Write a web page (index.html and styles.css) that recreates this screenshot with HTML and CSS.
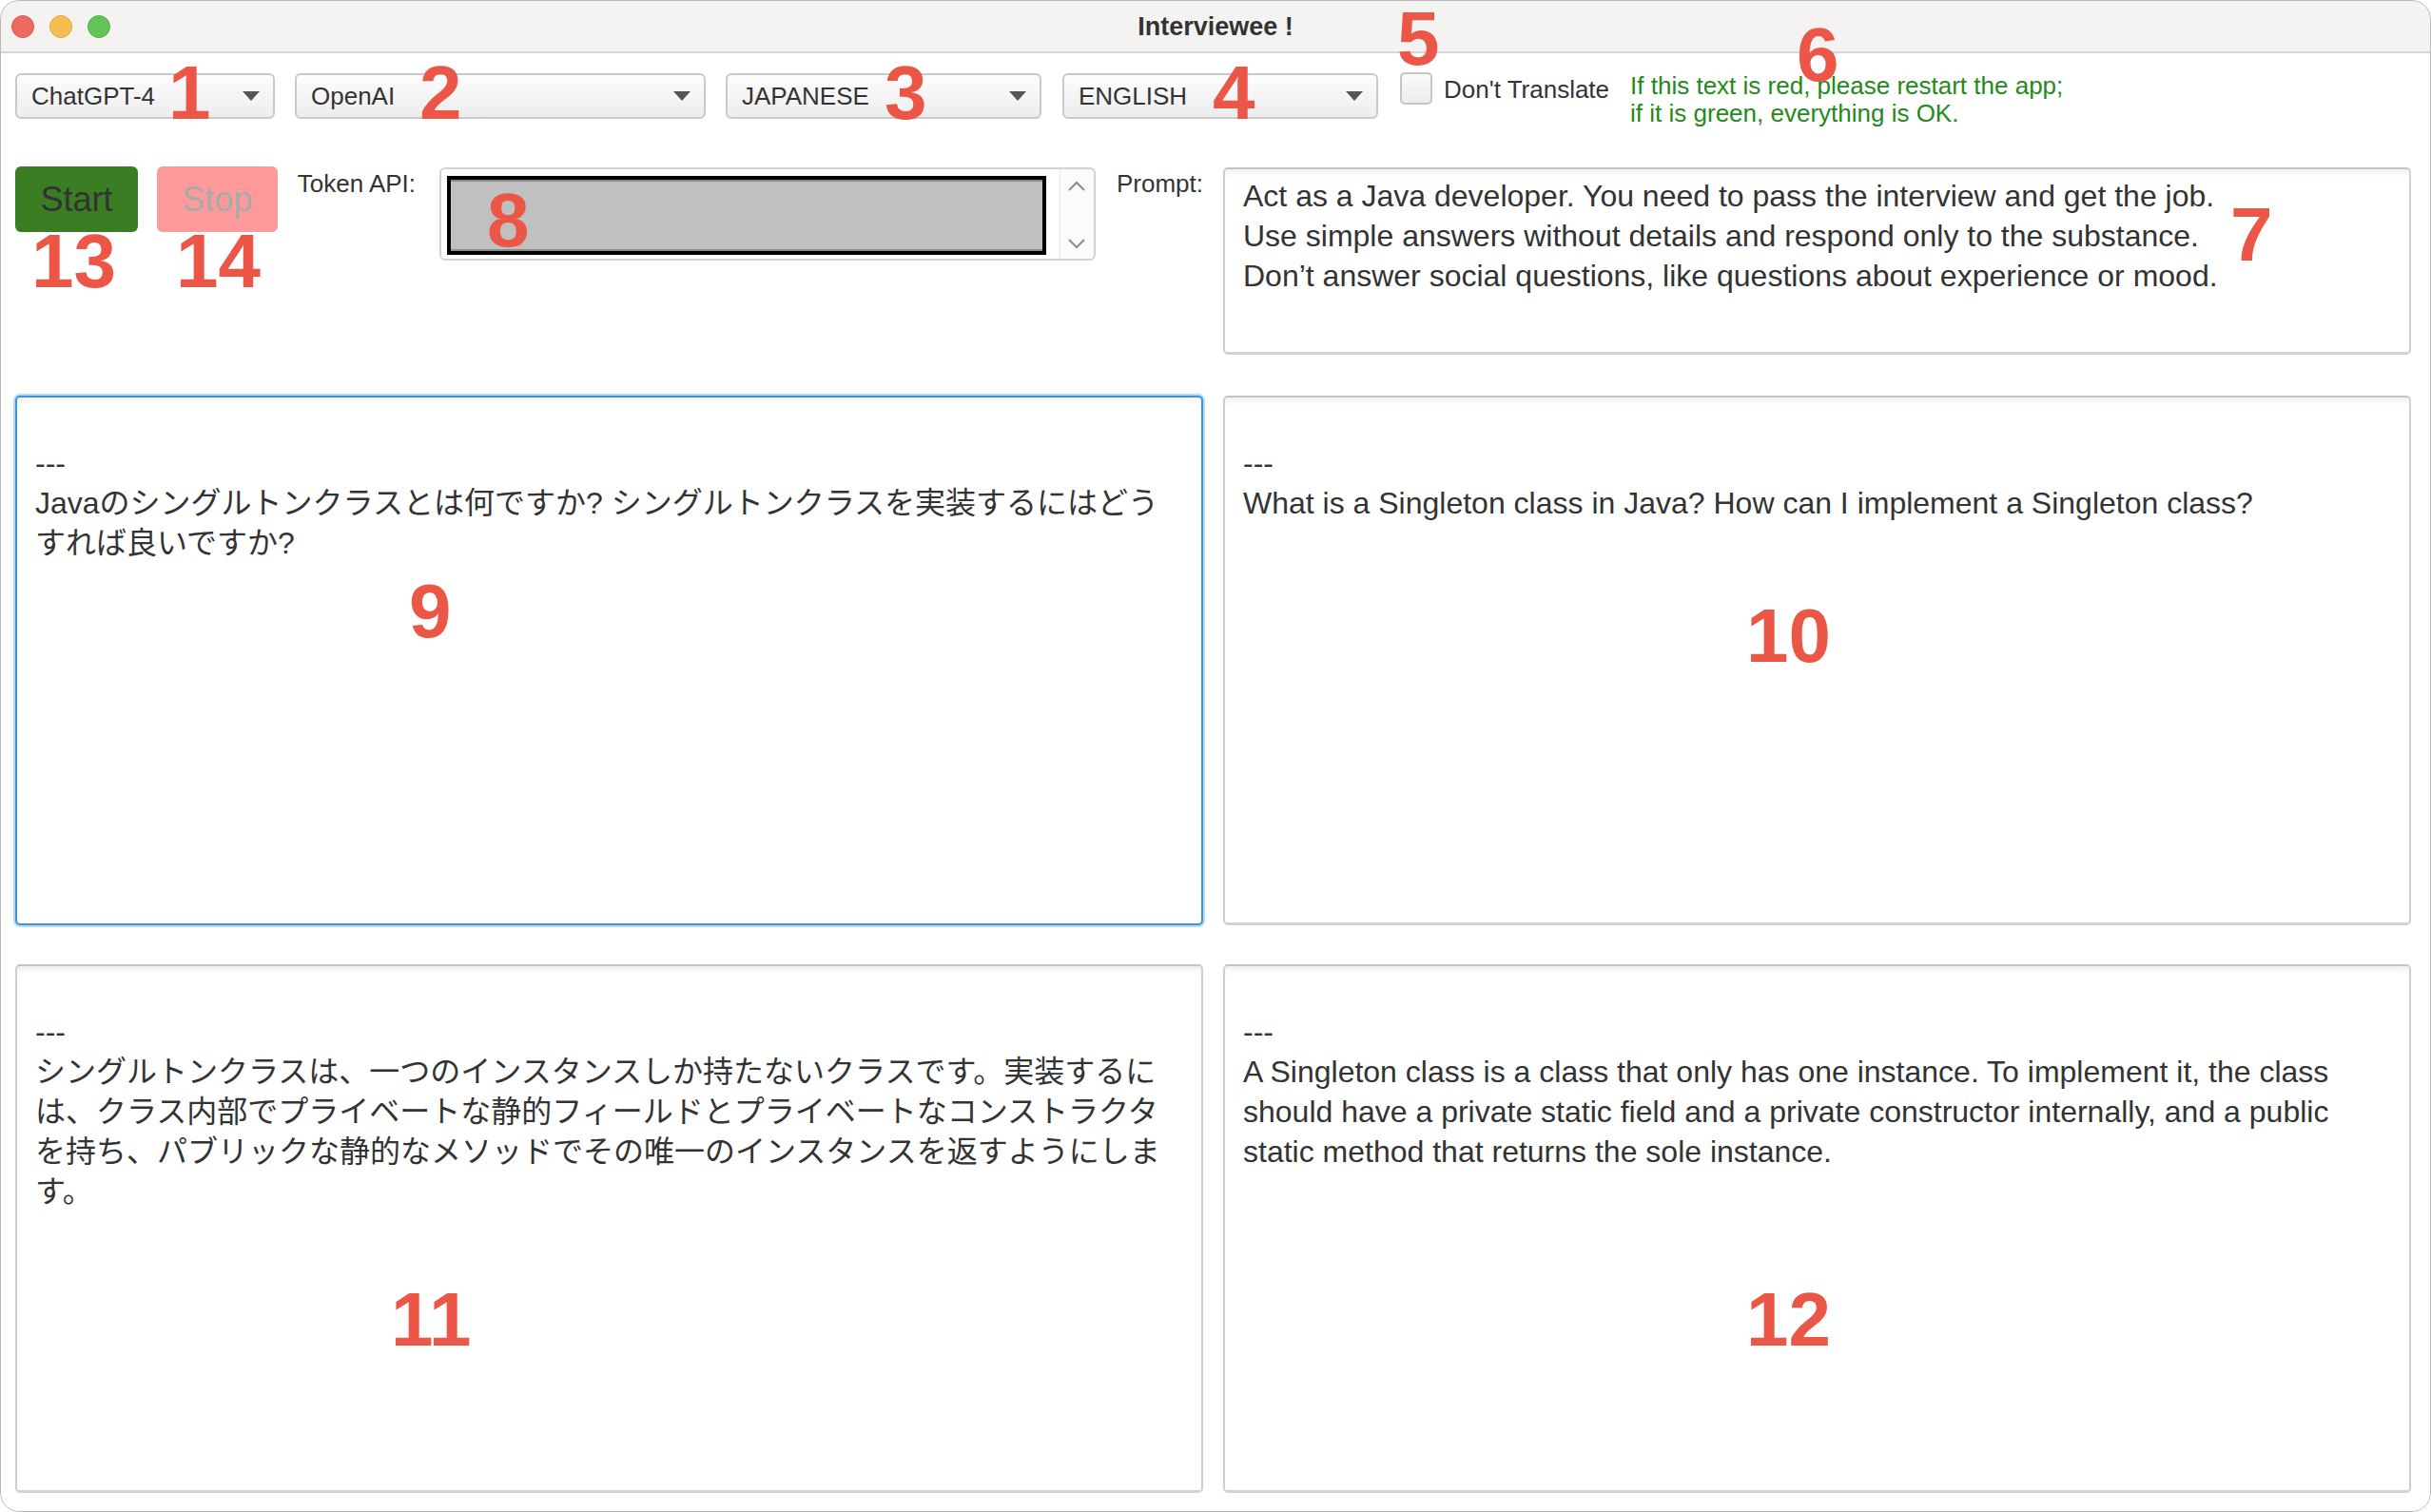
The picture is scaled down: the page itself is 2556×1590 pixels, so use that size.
FILE: index.html
```html
<!DOCTYPE html>
<html lang="en">
<head>
<meta charset="utf-8">
<title>Interviewee !</title>
<link rel="stylesheet" href="styles.css">
</head>
<body>
<div class="window">
  <div class="titlebar">
    <div class="lights">
      <span class="light red"></span>
      <span class="light yellow"></span>
      <span class="light green"></span>
    </div>
    <div class="title">Interviewee !</div>
    <div></div>
  </div>

  <div class="content">
    <div class="toolbar">
      <div class="combo combo-model"><span>ChatGPT-4</span><i class="arrow"></i></div>
      <div class="combo combo-provider"><span>OpenAI</span><i class="arrow"></i></div>
      <div class="combo combo-lang"><span>JAPANESE</span><i class="arrow"></i></div>
      <div class="combo combo-target"><span>ENGLISH</span><i class="arrow"></i></div>
      <div class="check"><span class="checkbox"></span><span class="check-label">Don't Translate</span></div>
      <div class="status">If this text is red, please restart the app;<br>if it is green, everything is OK.</div>
    </div>

    <div class="controls">
      <div class="controls-left">
        <div class="btn btn-start">Start</div>
        <div class="btn btn-stop">Stop</div>
        <span class="label label-token">Token API:</span>
        <div class="token">
          <div class="token-field"></div>
          <div class="token-scroll">
            <svg class="chev" width="20" height="12" viewBox="0 0 20 12"><path d="M2 10 L10 2 L18 10" fill="none" stroke="#8c8c8c" stroke-width="2"/></svg>
            <svg class="chev" width="20" height="12" viewBox="0 0 20 12"><path d="M2 2 L10 10 L18 2" fill="none" stroke="#8c8c8c" stroke-width="2"/></svg>
          </div>
        </div>
        <span class="label label-prompt">Prompt:</span>
      </div>
      <div class="area prompt">Act as a Java developer. You need to pass the interview and get the job.<br>Use simple answers without details and respond only to the substance.<br>Don’t answer social questions, like questions about experience or mood.</div>
    </div>

    <div class="panes">
      <div class="area pane focused"><br>---<br>Javaのシングルトンクラスとは何ですか? シングルトンクラスを実装するにはどう<br>すれば良いですか?</div>
      <div class="area pane"><br>---<br>What is a Singleton class in Java? How can I implement a Singleton class?</div>
      <div class="area pane"><br>---<br>シングルトンクラスは、一つのインスタンスしか持たないクラスです。実装するに<br>は、クラス内部でプライベートな静的フィールドとプライベートなコンストラクタ<br>を持ち、パブリックな静的なメソッドでその唯一のインスタンスを返すようにしま<br>す。</div>
      <div class="area pane"><br>---<br>A Singleton class is a class that only has one instance. To implement it, the class<br>should have a private static field and a private constructor internally, and a public<br>static method that returns the sole instance.</div>
    </div>
  </div>

  <span class="mark m1">1</span>
  <span class="mark m2">2</span>
  <span class="mark m3">3</span>
  <span class="mark m4">4</span>
  <span class="mark m5">5</span>
  <span class="mark m6">6</span>
  <span class="mark m7">7</span>
  <span class="mark m8">8</span>
  <span class="mark m9">9</span>
  <span class="mark m10">10</span>
  <span class="mark m11">11</span>
  <span class="mark m12">12</span>
  <span class="mark m13">13</span>
  <span class="mark m14">14</span>
</div>
</body>
</html>
```

FILE: styles.css
```css
html, body {
  margin: 0;
  padding: 0;
  background: #ffffff;
  overflow: hidden;
}

body {
  font-family: "Liberation Sans", Arial, "Noto Sans CJK JP", sans-serif;
  color: #333333;
}

.window {
  position: relative;
  width: 2556px;
  height: 1590px;
  background: #ffffff;
  border-radius: 20px;
  overflow: hidden;
  box-sizing: border-box;
}

.window::after {
  content: "";
  position: absolute;
  inset: 0;
  border: 1px solid #b9b9b9;
  border-radius: 20px;
  pointer-events: none;
}

/* ---------- title bar ---------- */
.titlebar {
  height: 56px;
  box-sizing: border-box;
  background: #f4f3f2;
  border-bottom: 2px solid #d6d6d6;
  display: grid;
  grid-template-columns: 1fr auto 1fr;
  align-items: center;
}

.lights {
  display: flex;
  gap: 16px;
  padding-left: 12px;
  padding-top: 2px;
}

.light {
  width: 24px;
  height: 24px;
  border-radius: 50%;
  box-sizing: border-box;
}

.light.red { background: #ee6a5f; border: 1px solid #d8574c; }
.light.yellow { background: #f5be4f; border: 1px solid #dca53a; }
.light.green { background: #61c454; border: 1px solid #4eae42; }

.title {
  font-weight: bold;
  font-size: 27px;
  color: #333333;
  padding-top: 2px;
}

/* ---------- content ---------- */
.content {
  padding: 0 21px 0 16px;
}

.toolbar {
  margin-top: 21px;
  height: 48px;
  display: flex;
  align-items: flex-start;
}

.combo {
  height: 48px;
  box-sizing: border-box;
  border: 2px solid #c9c9c9;
  border-radius: 6px;
  background: linear-gradient(to bottom, #fdfdfd, #ededed);
  display: flex;
  align-items: center;
  justify-content: space-between;
  padding: 0 14px 0 15px;
  font-size: 26px;
  color: #333333;
}

.combo-model { width: 273px; }
.combo-provider { width: 432px; margin-left: 21px; }
.combo-lang { width: 332px; margin-left: 21px; }
.combo-target { width: 332px; margin-left: 22px; }

.arrow {
  width: 0;
  height: 0;
  border-left: 9px solid transparent;
  border-right: 9px solid transparent;
  border-top: 10px solid #555555;
}

.check {
  display: flex;
  align-items: center;
  margin-left: 23px;
  margin-top: -1px;
}

.checkbox {
  width: 34px;
  height: 34px;
  box-sizing: border-box;
  border: 2px solid #c6c6c6;
  border-radius: 5px;
  background: linear-gradient(to bottom, #fbfbfb, #ececec);
}

.check-label {
  font-size: 26px;
  margin-left: 12px;
  margin-top: 2px;
  color: #333333;
}

.status {
  margin-left: 22px;
  margin-top: -1px;
  font-size: 26px;
  line-height: 29px;
  color: #238a1a;
}

/* ---------- controls row ---------- */
.controls {
  margin-top: 50px;
  display: grid;
  grid-template-columns: 1249px 1249px;
  column-gap: 21px;
  align-items: start;
}

.controls-left {
  display: flex;
  align-items: flex-start;
}

.btn {
  height: 69px;
  border-radius: 6px;
  display: flex;
  align-items: center;
  justify-content: center;
  font-size: 36px;
}

.btn-start {
  width: 129px;
  background: #3b7d23;
  color: #333333;
}

.btn-stop {
  width: 127px;
  margin-left: 20px;
  background: #ff9a9a;
  color: #aaaaaa;
}

.label {
  font-size: 26px;
  line-height: 30px;
  margin-top: 3px;
  color: #333333;
}

.label-token {
  margin-left: 21px;
  width: 129px;
}

.label-prompt { margin-left: 22px; }

.token {
  margin-left: 20px;
  margin-top: 1px;
  width: 691px;
  height: 98px;
  box-sizing: border-box;
  border: 2px solid #d3d3d3;
  border-radius: 6px;
  background: #ffffff;
  display: flex;
  padding: 7px 0 4px 6px;
}

.token-field {
  flex: 1;
  box-sizing: border-box;
  height: 83px;
  border: 4px solid #000000;
  background: #c0c0c0;
  box-shadow: inset 0 2px 0 #8a8a8a, inset 0 -2px 0 #8a8a8a;
  margin-right: 14px;
}

.token-scroll {
  width: 35px;
  margin-top: -7px;
  margin-bottom: -4px;
  border-left: 1px solid #e8e8e8;
  background: #fbfbfb;
  display: flex;
  flex-direction: column;
  align-items: center;
  justify-content: space-between;
  padding: 12px 0 10px;
  border-radius: 0 5px 5px 0;
}

/* ---------- text areas ---------- */
.area {
  box-sizing: border-box;
  border: 2px solid #cfcfcf;
  border-top-color: #c4c4c4;
  border-bottom: 3px solid #d3d3d3;
  border-radius: 5px;
  background: #ffffff;
  box-shadow: inset 0 9px 8px -7px rgba(0, 0, 0, 0.09);
  padding: 7px 19px 6px;
  font-size: 32px;
  line-height: 42px;
  color: #333333;
  white-space: nowrap;
  overflow: hidden;
}

.prompt {
  height: 197px;
  margin-top: 1px;
}

.panes {
  margin-top: 43px;
  display: grid;
  grid-template-columns: 1249px 1249px;
  grid-template-rows: 557px 556px;
  column-gap: 21px;
  row-gap: 41px;
}

.pane {
  padding-top: 6px;
}

.pane.focused {
  border: 2px solid #3d95d7;
  box-shadow: 0 0 0 2px #b7dbf4, inset 0 9px 8px -7px rgba(0, 0, 0, 0.08);
}

/* ---------- annotation numbers (overlays) ---------- */
.mark {
  position: absolute;
  font-family: "Liberation Sans", Arial, sans-serif;
  font-weight: bold;
  font-size: 80px;
  line-height: 80px;
  color: #ec5646;
}

.m1 { left: 177px; top: 58px; }
.m2 { left: 441px; top: 58px; }
.m3 { left: 930px; top: 58px; }
.m4 { left: 1275px; top: 58px; }
.m5 { left: 1469px; top: 1px; }
.m6 { left: 1889px; top: 18px; }
.m7 { left: 2345px; top: 207px; }
.m8 { left: 512px; top: 192px; }
.m9 { left: 430px; top: 603px; }
.m10 { left: 1836px; top: 629px; }
.m11 { left: 411px; top: 1348px; }
.m12 { left: 1836px; top: 1348px; }
.m13 { left: 33px; top: 235px; }
.m14 { left: 185px; top: 235px; }
```
